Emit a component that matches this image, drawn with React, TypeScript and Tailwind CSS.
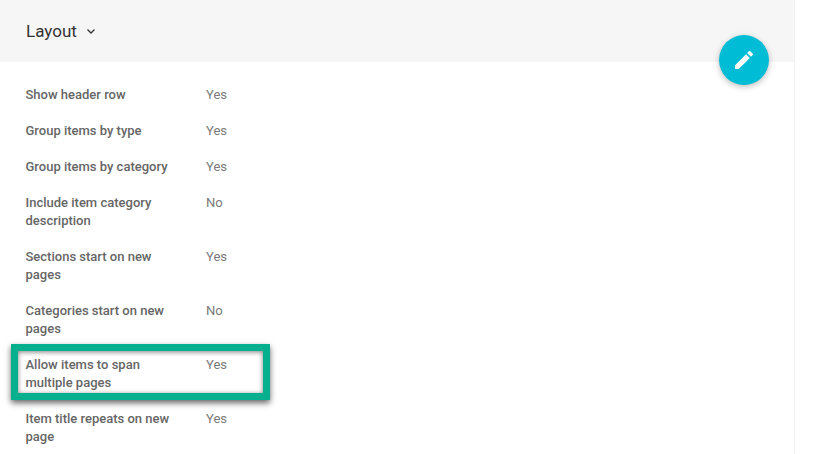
const rows = [
  { label: "Show header row", value: "Yes" },
  { label: "Group items by type", value: "Yes" },
  { label: "Group items by category", value: "Yes" },
  { label: "Include item category description", value: "No" },
  { label: "Sections start on new pages", value: "Yes" },
  { label: "Categories start on new pages", value: "No" },
  { label: "Allow items to span multiple pages", value: "Yes", highlighted: true },
  { label: "Item title repeats on new page", value: "Yes" },
];

const App = () => {
  return (
    <div className="relative w-[814px] h-[454px] overflow-hidden bg-white font-['Roboto',sans-serif]">
      <div className="w-[795px] h-full border-r border-[#f2f2f2]">
        {/* Header */}
        <div className="h-[62px] bg-[#f6f6f6] flex items-center pl-[26px] gap-[8px]">
          <h2 className="text-[17px] leading-[24px] text-[#333333]">Layout</h2>
          <svg width="12" height="12" viewBox="0 0 12 12" fill="none" className="text-[#333333]">
            <path d="M2.5 4.5 6 8l3.5-3.5" stroke="currentColor" strokeWidth="1.3" />
          </svg>
        </div>

        {/* Settings */}
        <div className="pt-[24px] pl-[26px] flex flex-col gap-[18px]">
          {rows.map((row) => (
            <div key={row.label} className="relative flex text-[13px] leading-[18px]">
              {row.highlighted && (
                <div className="absolute -left-[15px] -top-[12px] w-[259px] h-[56px] border-[7px] border-[#06b08f] shadow-[0_3px_6px_rgba(0,0,0,0.6),inset_0_1px_5px_rgba(0,0,0,0.5)]" />
              )}
              <div className="w-[160px] mr-[20.5px] -ml-[0.5px] font-medium text-[#666666]">{row.label}</div>
              <div className="text-[#7a7a7a]">{row.value}</div>
            </div>
          ))}
        </div>
      </div>

      {/* Edit button */}
      <button className="absolute left-[719px] top-[35px] w-[50px] h-[50px] rounded-full bg-[#00bcd4] flex items-center justify-center shadow-[0_2px_6px_rgba(0,0,0,0.25)]">
        <svg width="24" height="24" viewBox="0 0 24 24" fill="#ffffff">
          <path d="M3 17.25V21h3.75L17.81 9.94l-3.75-3.75L3 17.25zM20.71 7.04a1 1 0 0 0 0-1.41l-2.34-2.34a1 1 0 0 0-1.41 0l-1.83 1.83 3.75 3.75 1.83-1.83z" />
        </svg>
      </button>
    </div>
  );
};

export default App;
